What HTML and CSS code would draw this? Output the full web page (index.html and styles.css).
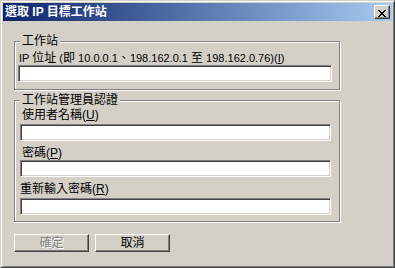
FILE: index.html
```html
<!DOCTYPE html>
<html lang="zh-Hant">
<head>
<meta charset="utf-8">
<title>選取 IP 目標工作站</title>
<link rel="stylesheet" href="styles.css">
</head>
<body>
<div class="window">
  <div class="titlebar">
    <span class="title">選取 IP 目標工作站</span>
    <button class="close" type="button" aria-label="關閉">
      <svg width="8" height="7" viewBox="0 0 8 7" shape-rendering="crispEdges"><path fill="#000" d="M0 0h2v1H0z M6 0h2v1H6z M1 1h2v1H1z M5 1h2v1H5z M2 2h4v1H2z M3 3h2v1H3z M2 4h4v1H2z M1 5h2v1H1z M5 5h2v1H5z M0 6h2v1H0z M6 6h2v1H6z"/></svg>
    </button>
  </div>
  <div class="client">
    <div class="group group-ws">
      <div class="legend">工作站</div>
      <div class="label label-ip">IP <span class="c">位址</span> (<span class="c">即</span> 10.0.0.1<span class="c">、</span>198.162.0.1 <span class="c">至</span> 198.162.0.76)(<u>I</u>)</div>
      <input class="edit edit-ip" type="text">
    </div>
    <div class="group group-auth">
      <div class="legend">工作站管理員認證</div>
      <div class="label label-user">使用者名稱(<u>U</u>)</div>
      <input class="edit edit-auth edit-user" type="text">
      <div class="label label-pass">密碼(<u>P</u>)</div>
      <input class="edit edit-auth edit-pass" type="password">
      <div class="label label-re">重新輸入密碼(<u>R</u>)</div>
      <input class="edit edit-auth edit-re" type="password">
    </div>
    <div class="buttons">
      <button class="btn btn-disabled" type="button">確定</button>
      <button class="btn" type="button">取消</button>
    </div>
  </div>
</div>
</body>
</html>
```
FILE: styles.css
```css
html, body {
  margin: 0;
  padding: 0;
  background: #d4d0c8;
}

body {
  font-family: "Liberation Sans", "Noto Sans CJK TC", sans-serif;
  font-size: 12px;
  line-height: 12px;
  color: #000;
}

.window {
  box-sizing: border-box;
  width: 395px;
  height: 268px;
  padding: 2px;
  background: #d4d0c8;
  border: 1px solid;
  border-color: #d4d0c8 #404040 #404040 #d4d0c8;
  box-shadow: inset 1px 1px 0 #fff, inset -1px -1px 0 #808080;
}

.titlebar {
  height: 18px;
  display: flex;
  align-items: center;
  justify-content: space-between;
  padding: 0 2px;
  background: linear-gradient(to right, #0a246a, #a6caf0);
}

.title {
  color: #fff;
  font-weight: bold;
  font-size: 12px;
  line-height: 12px;
  white-space: nowrap;
}

.close {
  box-sizing: border-box;
  width: 16px;
  height: 14px;
  margin: 0;
  padding: 2px 0 0 3px;
  background: #d4d0c8;
  border: 1px solid;
  border-color: #fff #404040 #404040 #fff;
  box-shadow: inset -1px -1px 0 #808080;
}

.close svg {
  display: block;
}

.client {
  padding: 20px 0 0 11px;
}

.group {
  box-sizing: border-box;
  width: 326px;
  border: 1px solid #808080;
  box-shadow: inset 1px 1px 0 #fff, 1px 1px 0 #fff;
}

.group-ws {
  height: 49px;
}

.group-auth {
  height: 122px;
  margin-top: 10px;
}

.legend {
  width: fit-content;
  height: 12px;
  margin: -7px 0 0 5px;
  padding: 0 2px;
  background: #d4d0c8;
  white-space: nowrap;
}

.label {
  height: 12px;
  white-space: nowrap;
}

.label-ip {
  font-size: 11px;
  margin: 5px 0 0 4px;
}

.label-ip .c {
  font-size: 12px;
}

.label-user {
  margin: 3px 0 0 7px;
}

.label-pass {
  margin: 6px 0 0 7px;
}

.label-re {
  margin: 6px 0 0 5px;
}

.edit {
  display: block;
  box-sizing: border-box;
  height: 17px;
  margin: 0;
  padding: 0 2px;
  background: #fff;
  border: 1px solid;
  border-color: #808080 #fff #fff #808080;
  box-shadow: inset 1px 1px 0 #404040, inset -1px -1px 0 #d4d0c8;
  outline: none;
  font: inherit;
}

.edit-ip {
  width: 314px;
  margin: 1px 0 0 3px;
}

.edit-auth {
  width: 311px;
  margin-left: 5px;
}

.edit-user {
  margin-top: 3px;
}

.edit-pass {
  margin-top: 1px;
}

.edit-re {
  margin-top: 3px;
}

.buttons {
  display: flex;
  gap: 6px;
  margin-top: 12px;
}

.btn {
  box-sizing: border-box;
  width: 75px;
  height: 18px;
  margin: 0;
  padding: 0;
  background: #d4d0c8;
  border: 1px solid;
  border-color: #fff #404040 #404040 #fff;
  box-shadow: inset -1px -1px 0 #808080;
  font-family: "Liberation Sans", "Noto Sans CJK TC", sans-serif;
  font-size: 12px;
  line-height: 12px;
  color: #000;
}

.btn-disabled {
  color: #808080;
  text-shadow: 1px 1px 0 #fff;
}
```
